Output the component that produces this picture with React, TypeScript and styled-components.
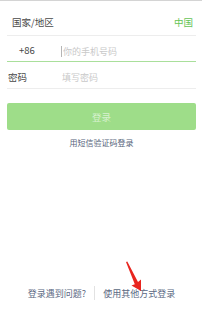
import React from "react";
import styled, { createGlobalStyle } from "styled-components";

const GlobalStyle = createGlobalStyle`
  html, body {
    margin: 0;
    padding: 0;
    background: #ffffff;
  }
  body {
    font-family: "Noto Sans CJK SC", "Noto Sans", sans-serif;
  }
`;

const Page = styled.div`
  position: relative;
  display: flex;
  flex-direction: column;
  height: 321px;
  border-top: 1px solid #d4d4d4;
  box-sizing: border-box;
  padding: 0 6px 0 7px;
`;

const Row = styled.div<{ $height: number; $active?: boolean; $pad?: number; $top?: number }>`
  display: flex;
  align-items: center;
  box-sizing: border-box;
  height: ${(p) => p.$height}px;
  border-bottom: 1px solid ${(p) => (p.$active ? "#a9df9b" : "#ededed")};
  padding-top: ${(p) => p.$top ?? 5}px;
  padding-left: ${(p) => p.$pad ?? 0}px;
  padding-right: 3px;
  font-size: 9.5px;
  color: #484848;
`;

const Label = styled.span<{ $width?: number }>`
  width: ${(p) => p.$width ?? 54}px;
  flex-shrink: 0;
  line-height: 1;
`;

const Country = styled.span`
  margin-left: auto;
  color: #66c455;
  font-size: 9.5px;
  line-height: 1;
`;

const Caret = styled.span`
  width: 1px;
  height: 11px;
  background: #b5b5b5;
  margin-right: 1px;
  flex-shrink: 0;
`;

const Field = styled.input`
  flex: 1;
  min-width: 0;
  border: none;
  outline: none;
  padding: 0;
  background: transparent;
  font-family: inherit;
  font-size: 9px;
  color: #484848;

  &::placeholder {
    color: #c9c9c9;
  }
`;

const LoginButton = styled.button`
  margin-top: 14px;
  height: 27px;
  width: 100%;
  border: none;
  border-radius: 2px;
  background: #9edd89;
  color: #d7f1cf;
  font-family: inherit;
  font-size: 9.5px;
  padding: 0;
`;

const SmsLink = styled.div`
  margin-top: 7px;
  text-align: center;
  font-size: 8px;
  color: #56647a;
`;

const Footer = styled.div`
  margin-top: auto;
  margin-bottom: 21px;
  display: flex;
  justify-content: center;
  align-items: center;
  font-size: 9px;
  color: #5a6882;
`;

const FooterLink = styled.span`
  line-height: 1;
`;

const Divider = styled.span`
  width: 1px;
  height: 14px;
  background: #e2e2e2;
  margin: 0 8px;
`;

const Arrow = styled.svg`
  position: absolute;
  left: 120px;
  top: 255px;
`;

export default function App() {
  return (
    <>
      <GlobalStyle />
      <Page>
        <Row $height={35} $pad={5} $top={9}>
          <Label>国家/地区</Label>
          <Country>中国</Country>
        </Row>
        <Row $height={26} $active $pad={12}>
          <Label $width={42}>+86</Label>
          <Caret />
          <Field placeholder="你的手机号码" />
        </Row>
        <Row $height={27} $pad={1}>
          <Label $width={54}>密码</Label>
          <Field type="password" placeholder="填写密码" />
        </Row>
        <LoginButton>登录</LoginButton>
        <SmsLink>用短信验证码登录</SmsLink>
        <Footer>
          <FooterLink>登录遇到问题?</FooterLink>
          <Divider />
          <FooterLink>使用其他方式登录</FooterLink>
        </Footer>
        <Arrow width="30" height="40" viewBox="0 0 30 40">
          <polygon points="6,6 7.3,5.6 18,26 21,23.5 21,35 11.5,29.5 14.8,28.3" fill="#e8251f" />
        </Arrow>
      </Page>
    </>
  );
}
